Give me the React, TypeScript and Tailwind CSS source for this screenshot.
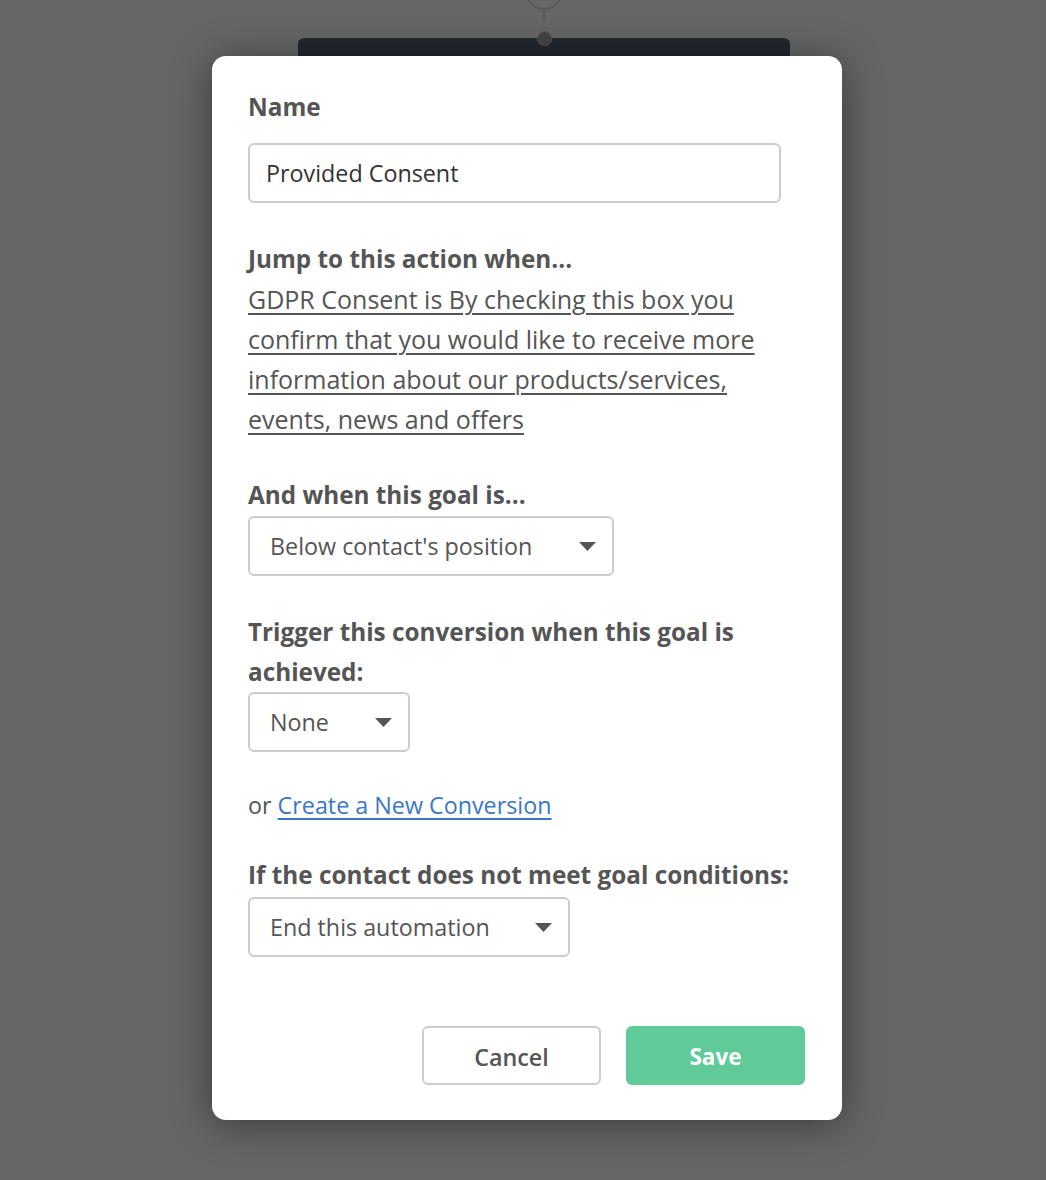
import React from "react";

function Caret() {
  return (
    <svg width="17" height="9" viewBox="0 0 17 9" className="shrink-0">
      <path d="M0 0 L17 0 L8.5 9 Z" fill="#555555" />
    </svg>
  );
}

function Select({ label, width }: { label: string; width: string }) {
  return (
    <div
      className={`${width} h-[60px] flex items-center justify-between pl-[20px] pr-[16px] border-2 border-[#cccccc] rounded-[6px] bg-white text-[23.3px] text-[#555555]`}
    >
      <span className="pt-[1px]">{label}</span>
      <Caret />
    </div>
  );
}

export default function App() {
  return (
    <div
      className="relative w-[1046px] h-[1180px] bg-[#666666] overflow-hidden"
      style={{ fontFamily: '"Open Sans", "Noto Sans", sans-serif' }}
    >
      {/* background canvas nodes */}
      <div className="absolute left-[526px] top-[-26px] w-[36px] h-[36px] rounded-full border-2 border-[#595959]" />
      <div className="absolute left-[543px] top-[10px] w-[2px] h-[12px] bg-[#595959]" />
      <div className="absolute left-[298px] top-[38px] w-[492px] h-[40px] rounded-[6px] bg-[#23282f]" />
      <div className="absolute left-[537px] top-[31px] w-[15px] h-[15px] rounded-full bg-[#444444] border border-[#5a5a5a]" />

      {/* modal */}
      <div className="absolute left-[212px] top-[56px] w-[630px] h-[1064px] bg-white rounded-[14px] shadow-[0_4px_40px_rgba(0,0,0,0.45)] pl-[36px] pr-[37px] pt-[31px]">
        <div className="text-[24.3px] leading-[40px] font-bold text-[#555555]">Name</div>
        <div className="mt-[16px] w-[533px] h-[60px] flex items-center px-[16px] border-2 border-[#cccccc] rounded-[6px] text-[23.3px] text-[#333333]">
          Provided Consent
        </div>

        <div className="mt-[36px] text-[24.3px] leading-[40px] font-bold text-[#555555]">
          Jump to this action when...
        </div>
        <div className="w-[545px] text-[25px] leading-[40px] text-[#555555] underline underline-offset-[4px] decoration-2 decoration-[#555555]">
          GDPR Consent is By checking this box you confirm that you would like to receive more information about our products/services, events, news and offers
        </div>

        <div className="mt-[36px] text-[24.3px] leading-[40px] font-bold text-[#555555]">
          And when this goal is...
        </div>
        <div className="mt-[1px]">
          <Select label="Below contact's position" width="w-[366px]" />
        </div>

        <div className="mt-[36px] w-[545px] text-[24.3px] leading-[40px] font-bold text-[#555555]">
          Trigger this conversion when this goal is achieved:
        </div>
        <div>
          <Select label="None" width="w-[162px]" />
        </div>

        <div className="mt-[33px] text-[23.3px] leading-[40px] text-[#555555]">
          or{" "}
          <a className="text-[#3a78c3] underline underline-offset-[4px] decoration-2 cursor-pointer">
            Create a New Conversion
          </a>
        </div>

        <div className="mt-[30px] text-[24.3px] leading-[40px] font-bold text-[#555555] whitespace-nowrap">
          If the contact does not meet goal conditions:
        </div>
        <div className="mt-[2px]">
          <Select label="End this automation" width="w-[322px]" />
        </div>

        <div className="mt-[69px] flex justify-end gap-[25px]">
          <button className="w-[179px] h-[59px] pt-[3px] rounded-[6px] border-2 border-[#cccccc] bg-white text-[23.3px] font-semibold text-[#555555]">
            Cancel
          </button>
          <button className="w-[179px] h-[59px] pt-[3px] rounded-[6px] bg-[#60ca99] text-[22.5px] font-bold text-white">
            Save
          </button>
        </div>
      </div>
    </div>
  );
}
